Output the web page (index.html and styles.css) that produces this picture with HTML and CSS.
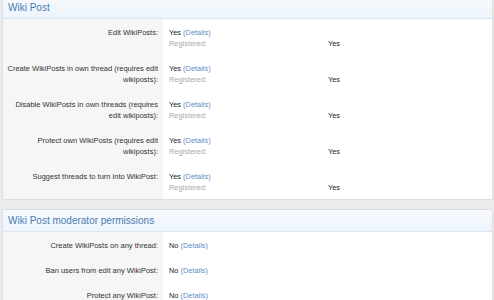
FILE: index.html
```html
<!DOCTYPE html>
<html lang="en">
<head>
  <meta charset="UTF-8" />
  <title>Permissions</title>
  <link rel="stylesheet" href="styles.css">
</head>
<body>
  <div class="pagina">

    <div class="painel painel-topo">
      <h3 class="painel-titulo">Wiki Post</h3>

      <div class="linha">
        <div class="rotulo">Edit WikiPosts:</div>
        <div class="valor">
          <div>Yes <a href="#">(Details)</a></div>
          <div class="grupo"><span class="grupo-nome">Registered:</span><span>Yes</span></div>
        </div>
      </div>

      <div class="linha">
        <div class="rotulo">Create WikiPosts in own thread (requires edit wikiposts):</div>
        <div class="valor">
          <div>Yes <a href="#">(Details)</a></div>
          <div class="grupo"><span class="grupo-nome">Registered:</span><span>Yes</span></div>
        </div>
      </div>

      <div class="linha">
        <div class="rotulo">Disable WikiPosts in own threads (requires edit wikiposts):</div>
        <div class="valor">
          <div>Yes <a href="#">(Details)</a></div>
          <div class="grupo"><span class="grupo-nome">Registered:</span><span>Yes</span></div>
        </div>
      </div>

      <div class="linha">
        <div class="rotulo">Protect own WikiPosts (requires edit wikiposts):</div>
        <div class="valor">
          <div>Yes <a href="#">(Details)</a></div>
          <div class="grupo"><span class="grupo-nome">Registered:</span><span>Yes</span></div>
        </div>
      </div>

      <div class="linha">
        <div class="rotulo">Suggest threads to turn into WikiPost:</div>
        <div class="valor">
          <div>Yes <a href="#">(Details)</a></div>
          <div class="grupo"><span class="grupo-nome">Registered:</span><span>Yes</span></div>
        </div>
      </div>
    </div>

    <div class="painel">
      <h3 class="painel-titulo">Wiki Post moderator permissions</h3>

      <div class="linha">
        <div class="rotulo">Create WikiPosts on any thread:</div>
        <div class="valor"><div>No <a href="#">(Details)</a></div></div>
      </div>

      <div class="linha">
        <div class="rotulo">Ban users from edit any WikiPost:</div>
        <div class="valor"><div>No <a href="#">(Details)</a></div></div>
      </div>

      <div class="linha">
        <div class="rotulo">Protect any WikiPost:</div>
        <div class="valor"><div>No <a href="#">(Details)</a></div></div>
      </div>
    </div>

  </div>
</body>
</html>
```

FILE: styles.css
```css
* {
  box-sizing: border-box;
}
body {
  margin: 0;
  background-color: #ebebeb;
  font-family: 'Liberation Sans', Arial, sans-serif;
  color: #333;
}

.pagina {
  padding: 0 1px 0 2px;
}

/* Painel */
.painel {
  background-color: #fff;
  border: 1px solid #dedede;
  border-radius: 2px;
  margin-bottom: 9px;
  overflow: hidden;
}
.painel-topo {
  margin-top: -4px;
}

.painel-titulo {
  margin: 0;
  height: 22px;
  padding: 0 5px;
  line-height: 21px;
  font-size: 10px;
  font-weight: normal;
  color: #4a7bb2;
  background: linear-gradient(#f7fafe, #edf4fc);
  border-bottom: 1px solid #dde5ee;
}

/* Linhas */
.linha {
  display: flex;
  line-height: 11px;
}
.rotulo {
  width: 160px;
  flex-shrink: 0;
  padding: 8px 5px 6px 3px;
  background-color: #f6f6f6;
  text-align: right;
  font-size: 7.5px;
  color: #333;
}
.valor {
  flex: 1;
  padding: 8px 6px 6px 6px;
  font-size: 7.4px;
  color: #222;
}
.valor a {
  color: #5f8dc6;
  text-decoration: none;
}

.grupo {
  display: flex;
  color: #222;
}
.grupo-nome {
  width: 159px;
  color: #a9a9a9;
}
```
